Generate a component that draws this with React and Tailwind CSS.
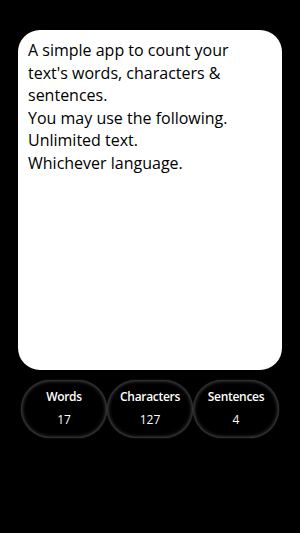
const stats = [
  { label: "Words", value: 17 },
  { label: "Characters", value: 127 },
  { label: "Sentences", value: 4 },
];

const App = () => {
  const text =
    "A simple app to count your text's words, characters & sentences.\nYou may use the following.\nUnlimited text.\nWhichever language.";

  return (
    <div className="w-[300px] h-[533px] bg-black flex flex-col items-center pt-[30px]" style={{ fontFamily: "'Open Sans', sans-serif" }}>
      <div className="w-[264px] h-[340px] bg-white rounded-[22px] pl-[10px] pr-[28px] pt-[9px]">
        <p className="text-black text-[16px] leading-[22.5px] whitespace-pre-line">{text}</p>
      </div>
      <div className="flex flex-row mt-[10px]">
        {stats.map((s) => (
          <div
            key={s.label}
            className="w-[86px] h-[58px] rounded-[29px] bg-black flex flex-col items-center justify-center gap-[11px] pb-[2px] shadow-[inset_0_0_4px_rgba(255,255,255,0.45),0_0_2px_rgba(255,255,255,0.15)]"
          >
            <span className="text-white text-[12px] font-semibold leading-none tracking-tight">{s.label}</span>
            <span className="text-white text-[12px] leading-none">{s.value}</span>
          </div>
        ))}
      </div>
    </div>
  );
};

export default App;
